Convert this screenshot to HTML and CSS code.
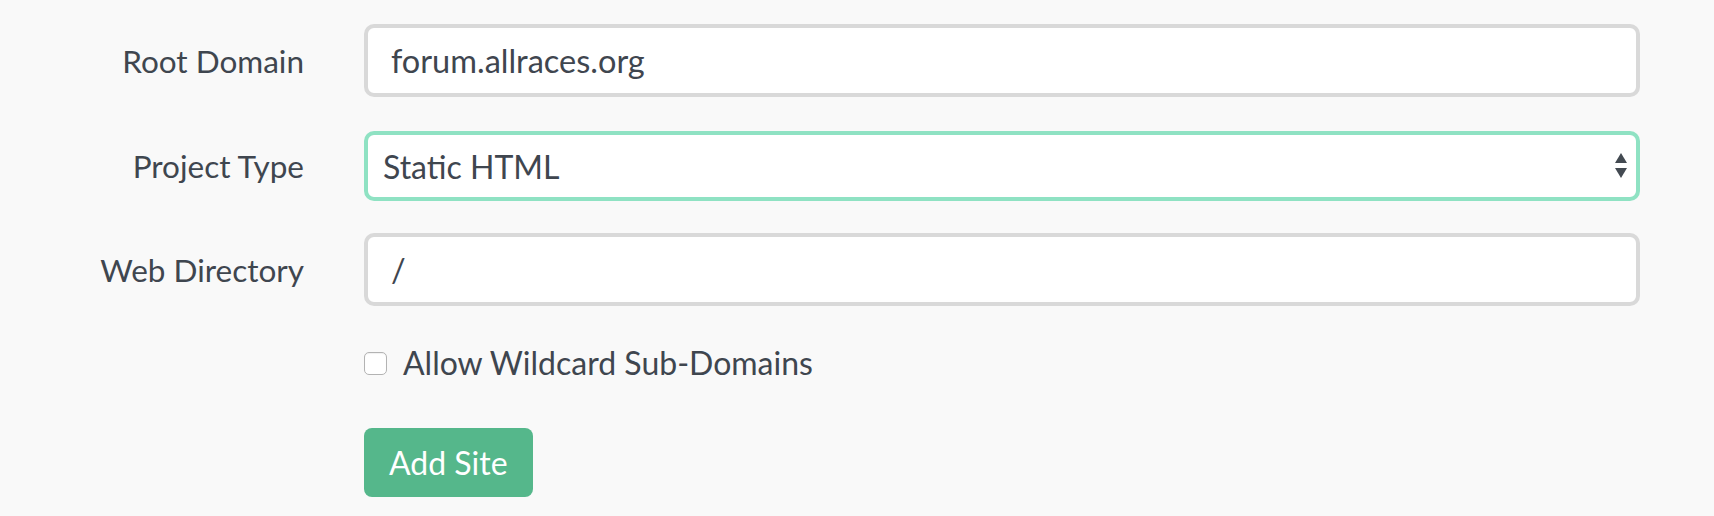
FILE: index.html
```html
<!DOCTYPE html>
<html lang="en">
<head>
<meta charset="utf-8">
<title>Add Site</title>
<link rel="stylesheet" href="styles.css">
</head>
<body>
<form class="site-form">
  <div class="form-row row-domain">
    <label class="form-label" for="domain">Root Domain</label>
    <input class="form-input" id="domain" type="text" value="forum.allraces.org">
  </div>
  <div class="form-row row-type">
    <label class="form-label" for="type">Project Type</label>
    <div class="select-wrap">
      <select class="form-select" id="type">
        <option>Static HTML</option>
      </select>
      <svg class="select-arrows" width="12" height="26" viewBox="0 0 12 26" aria-hidden="true">
        <polygon points="6,0 12,10 0,10" fill="#434a52"/>
        <polygon points="0,15 12,15 6,25" fill="#434a52"/>
      </svg>
    </div>
  </div>
  <div class="form-row row-dir">
    <label class="form-label" for="dir">Web Directory</label>
    <input class="form-input" id="dir" type="text" value="/">
  </div>
  <div class="form-row check-row">
    <span></span>
    <label class="check-label"><input class="form-check" type="checkbox"> Allow Wildcard Sub-Domains</label>
  </div>
  <div class="form-row button-row">
    <span></span>
    <div><button class="btn-add" type="button">Add Site</button></div>
  </div>
</form>
</body>
</html>
```
FILE: styles.css
```css
html, body {
  margin: 0;
  padding: 0;
  background: #f9f9f9;
}
body {
  font-family: Lato, "Open Sans", sans-serif;
  color: #3f464f;
}
.site-form {
  padding: 24px 74px 0 0;
}
.form-row {
  display: grid;
  grid-template-columns: 304px 1fr;
  column-gap: 60px;
  align-items: center;
  margin: 0;
}
.row-domain {
  margin-bottom: 34px;
}
.row-type {
  margin-bottom: 32px;
}
.form-label {
  text-align: right;
  font-size: 31.5px;
}
.form-input,
.form-select {
  box-sizing: border-box;
  width: 100%;
  height: 73px;
  border: 4px solid #d9d9d9;
  border-radius: 10px;
  background: #fff;
  font-family: Lato, "Open Sans", sans-serif;
  font-size: 32.5px;
  color: #3f464f;
  padding: 0 23px;
  outline: none;
  margin: 0;
}
.select-wrap {
  position: relative;
}
.form-select {
  appearance: none;
  -webkit-appearance: none;
  border-color: #8fe2c3;
  padding: 0 15px;
  height: 70px;
  font-size: 32px;
}
.select-arrows {
  position: absolute;
  right: 13px;
  top: 22px;
  pointer-events: none;
}
.check-row {
  margin-top: 34px;
}
.check-label {
  display: flex;
  align-items: center;
  gap: 16px;
  font-size: 32px;
  line-height: 38px;
  margin-top: 4px;
}
.form-check {
  appearance: none;
  -webkit-appearance: none;
  box-sizing: border-box;
  width: 23px;
  height: 23px;
  margin: 0;
  border: 1px solid #b3b3b3;
  border-radius: 5px;
  background: #fff;
  box-shadow: inset 0 1px 1px rgba(0,0,0,0.06);
}
.button-row {
  margin-top: 46px;
}
.btn-add {
  box-sizing: border-box;
  height: 69px;
  padding: 0 25px;
  border: none;
  border-radius: 8px;
  background: #55b78b;
  color: #fff;
  font-family: Lato, "Open Sans", sans-serif;
  font-size: 32px;
  cursor: pointer;
}
```
